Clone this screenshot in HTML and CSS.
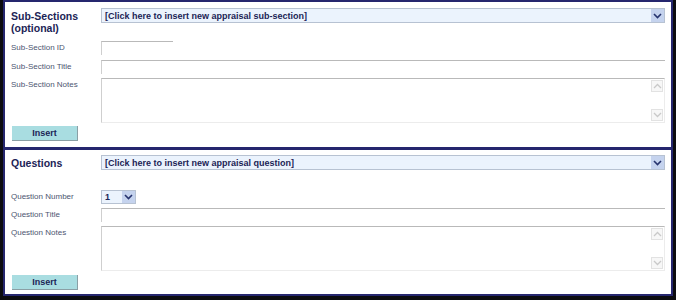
FILE: index.html
```html
<!DOCTYPE html>
<html lang="en">
<head>
    <meta charset="UTF-8">
    <title>Appraisal</title>
    <link rel="stylesheet" href="styles.css">
</head>
<body>
<div class="frame">
    <div class="panel">
        <div class="section sub">
            <div class="row head">
                <div class="title">Sub-Sections<br>(optional)</div>
                <div class="combo wide">
                    <span class="val">[Click here to insert new appraisal sub-section]</span>
                    <span class="btn"><svg width="9" height="6" viewBox="0 0 9 6"><path d="M1 1 L4.5 4.5 L8 1" fill="none" stroke="#26336e" stroke-width="1.6"/></svg></span>
                </div>
            </div>
            <div class="row r-id">
                <div class="label">Sub-Section ID</div>
                <div class="input short"></div>
            </div>
            <div class="row r-title">
                <div class="label">Sub-Section Title</div>
                <div class="input"></div>
            </div>
            <div class="row r-notes">
                <div class="label">Sub-Section Notes</div>
                <div class="area">
                    <div class="bar">
                        <span class="arr"><svg width="9" height="6" viewBox="0 0 9 6"><path d="M1 5 L4.5 1.5 L8 5" fill="none" stroke="#c9c9c9" stroke-width="1.3"/></svg></span>
                        <span class="arr"><svg width="9" height="6" viewBox="0 0 9 6"><path d="M1 1 L4.5 4.5 L8 1" fill="none" stroke="#c9c9c9" stroke-width="1.3"/></svg></span>
                    </div>
                </div>
            </div>
            <div class="insert">Insert</div>
        </div>
        <div class="section quest">
            <div class="row head">
                <div class="title">Questions</div>
                <div class="combo wide">
                    <span class="val">[Click here to insert new appraisal question]</span>
                    <span class="btn"><svg width="9" height="6" viewBox="0 0 9 6"><path d="M1 1 L4.5 4.5 L8 1" fill="none" stroke="#26336e" stroke-width="1.6"/></svg></span>
                </div>
            </div>
            <div class="row r-num">
                <div class="label">Question Number</div>
                <div class="combo num">
                    <span class="val">1</span>
                    <span class="btn"><svg width="9" height="6" viewBox="0 0 9 6"><path d="M1 1 L4.5 4.5 L8 1" fill="none" stroke="#26336e" stroke-width="1.6"/></svg></span>
                </div>
            </div>
            <div class="row r-title">
                <div class="label">Question Title</div>
                <div class="input"></div>
            </div>
            <div class="row r-notes">
                <div class="label">Question Notes</div>
                <div class="area">
                    <div class="bar">
                        <span class="arr"><svg width="9" height="6" viewBox="0 0 9 6"><path d="M1 5 L4.5 1.5 L8 5" fill="none" stroke="#c9c9c9" stroke-width="1.3"/></svg></span>
                        <span class="arr"><svg width="9" height="6" viewBox="0 0 9 6"><path d="M1 1 L4.5 4.5 L8 1" fill="none" stroke="#c9c9c9" stroke-width="1.3"/></svg></span>
                    </div>
                </div>
            </div>
            <div class="insert">Insert</div>
        </div>
    </div>
</div>
</body>
</html>
```

FILE: styles.css
```css
* {
    margin: 0;
    padding: 0;
    box-sizing: border-box;
}

body {
    background: #0c0c10;
    font-family: "Liberation Sans", Arial, sans-serif;
}

.frame {
    width: 676px;
    height: 300px;
    padding: 0 3px 4px 3px;
}

.panel {
    height: 296px;
    border: 2px solid #25266e;
    background: #fff;
}

.section {
    padding: 0 6px;
}

.section.sub {
    height: 145px;
    padding-top: 6px;
}

.section.quest {
    height: 145px;
    padding-top: 5px;
    border-top: 3px solid #25266e;
}

.row {
    display: flex;
    align-items: flex-start;
}

.title {
    width: 90px;
    font-size: 10.5px;
    line-height: 12px;
    font-weight: bold;
    color: #1c2456;
    padding-top: 2px;
}

.label {
    width: 90px;
    font-size: 8px;
    line-height: 10px;
    color: #4c5570;
    padding-top: 2px;
}

.sub .head {
    height: 33px;
}

.r-id {
    height: 19px;
}

.r-title {
    height: 18px;
}

.quest .head {
    height: 35px;
}

.r-num {
    height: 18px;
}

.combo {
    display: flex;
    align-items: center;
    height: 15px;
    background: #ebf3fd;
    border: 1px solid #b7c2d2;
}

.combo.wide {
    flex: 1;
}

.combo.num {
    width: 35px;
    height: 14px;
}

.combo .val {
    flex: 1;
    padding-left: 3px;
    font-size: 9px;
    font-weight: bold;
    color: #1c2456;
    white-space: nowrap;
}

.combo .btn {
    width: 13px;
    height: 13px;
    background: #c5d3ee;
    display: flex;
    align-items: center;
    justify-content: center;
}

.combo.num .btn {
    height: 12px;
}

.input {
    flex: 1;
    height: 14px;
    border-top: 1px solid #b9b9b9;
    border-left: 1px solid #cfcfcf;
}

.input.short {
    flex: none;
    width: 72px;
}

.area {
    flex: 1;
    height: 45px;
    display: flex;
    justify-content: flex-end;
    border-top: 1px solid #b9b9b9;
    border-left: 1px solid #cfcfcf;
    border-right: 1px solid #ececec;
    border-bottom: 1px solid #ececec;
}

.bar {
    width: 13px;
    padding: 1px 0;
    display: flex;
    flex-direction: column;
    justify-content: space-between;
}

.arr {
    width: 12px;
    height: 12px;
    border: 1px solid #e2e2e2;
    background: #f7f7f7;
    display: flex;
    align-items: center;
    justify-content: center;
}

.insert {
    width: 66px;
    height: 15px;
    margin: 3px 0 0 1px;
    background: #a9dde1;
    border-right: 1px solid #8a9fa5;
    border-bottom: 1px solid #8a9fa5;
    font-size: 9px;
    line-height: 14px;
    font-weight: bold;
    color: #1c2456;
    text-align: center;
}

.quest .insert {
    margin-top: 4px;
}
```
